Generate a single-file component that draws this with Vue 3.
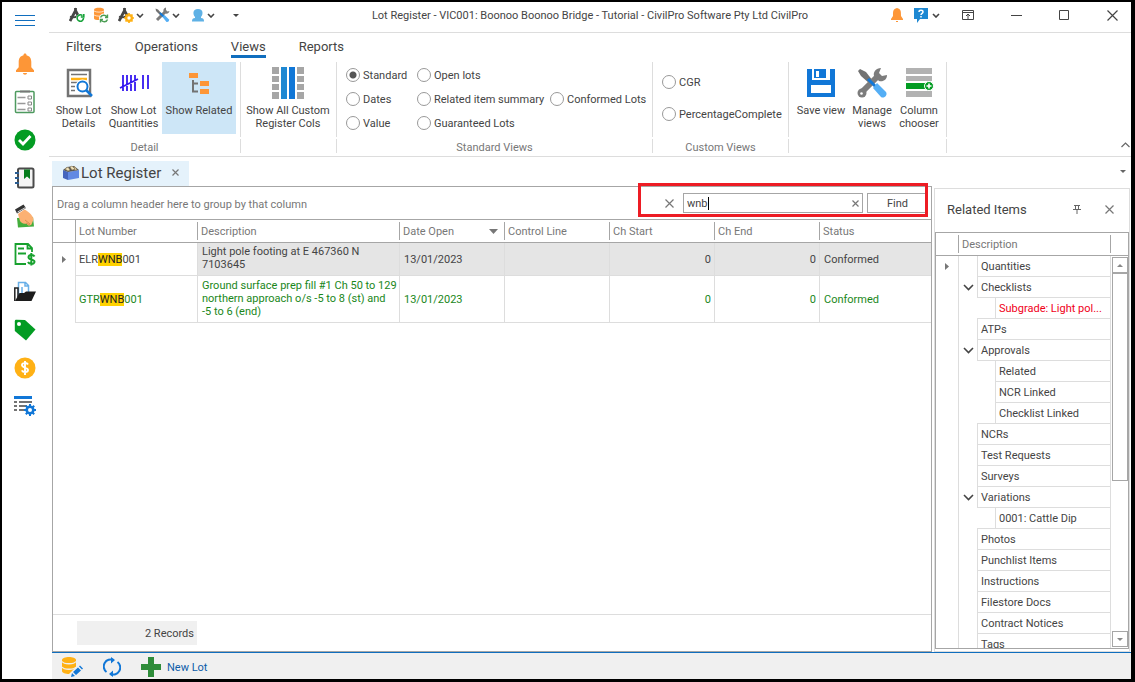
<script setup>
import { ref } from 'vue'

const tabs = ['Filters', 'Operations', 'Views', 'Reports']
const view = ref('Standard')
const search = ref('wnb')
const viewColumns = [
  ['Standard', 'Dates', 'Value'],
  ['Open lots', 'Related item summary', 'Guaranteed Lots'],
  ['', 'Conformed Lots', '']
]
const customViews = ['CGR', 'PercentageComplete']
const lots = [
  { pre: 'ELR', hit: 'WNB', post: '001', text: 'Light pole footing at E 467360 N 7103645', date: '13/01/2023', start: 0, end: 0, status: 'Conformed', current: true },
  { pre: 'GTR', hit: 'WNB', post: '001', text: 'Ground surface prep fill #1 Ch 50 to 129 northern approach o/s -5 to 8 (st) and -5\u00a0to 6 (end)', date: '13/01/2023', start: 0, end: 0, status: 'Conformed', current: false }
]
const tree = [
  { name: 'Quantities', level: 1, current: true },
  { name: 'Checklists', level: 1, open: true },
  { name: 'Subgrade: Light pol...', level: 2, last: true, alert: true },
  { name: 'ATPs', level: 1 },
  { name: 'Approvals', level: 1, open: true },
  { name: 'Related', level: 2 },
  { name: 'NCR Linked', level: 2 },
  { name: 'Checklist Linked', level: 2, last: true },
  { name: 'NCRs', level: 1 },
  { name: 'Test Requests', level: 1 },
  { name: 'Surveys', level: 1 },
  { name: 'Variations', level: 1, open: true },
  { name: '0001: Cattle Dip', level: 2, last: true },
  { name: 'Photos', level: 1 },
  { name: 'Punchlist Items', level: 1 },
  { name: 'Instructions', level: 1 },
  { name: 'Filestore Docs', level: 1 },
  { name: 'Contract Notices', level: 1 },
  { name: 'Tags', level: 1 }
]
</script>

<template>
  <div class="window">
    <nav class="rail" aria-label="Modules">
      <button class="menu" aria-label="Menu">
        <svg width="20" height="12" viewBox="0 0 20 12"><path d="M0 .5h20M0 5.5h20M0 10.5h20" stroke="#106ebe" /></svg>
      </button>
      <button aria-label="Notifications">
        <svg width="22" height="22" viewBox="0 0 22 22" fill="#fd9637"><path d="M11 .5c1 0 1.500.7 1.500 1.700C16 3 17.300 5.600 17.300 9v5.300l2.700 3V19H2v-1.700l2.700-3V9C4.700 5.600 6 3 9.500 2.200 9.500 1.200 10 .5 11 .5zM9 20h4c0 1-1 1.700-2 1.700S9 21 9 20z" /></svg>
      </button>
      <button aria-label="Checklists">
        <svg width="22" height="24" viewBox="0 0 22 24" fill="none"><rect x="1.500" y="1.500" width="18.500" height="21" rx="1" stroke="#4e9a5f" stroke-width="1.500" /><path d="M6 1.500h10" stroke="#777" stroke-width="2" /><path d="M3.500 7.500h8M3.500 13.500h8M3.500 19.500h8" stroke="#999" stroke-width="1.300" /><path d="M14 6h3.500v3H14zM14 12h3.500v3H14zM14 18h3.500v3H14z" stroke="#888" /></svg>
      </button>
      <button aria-label="Approvals">
        <svg width="22" height="22" viewBox="0 0 22 22"><circle cx="11" cy="11" r="10.500" fill="#039c23" /><path d="M5 11l4 4 7.500-8" fill="none" stroke="#fff" stroke-width="2.800" /></svg>
      </button>
      <button aria-label="Diary">
        <svg width="20" height="22" viewBox="0 0 20 22"><rect x="3" y="1.500" width="15.500" height="19" rx="1.500" fill="#f4f4f4" stroke="#4b4b4b" stroke-width="2" /><path d="M9 2.500h6v9.500l-3-2.500-3 2.500z" fill="#047d1b" /><path d="M0 6h4M0 11h4M0 16h4" stroke="#2b5d92" stroke-width="2" /></svg>
      </button>
      <button aria-label="Payments">
        <svg width="22" height="24" viewBox="0 0 22 24"><path d="M3 14l16-1 1 9.500-16 1z" fill="#44ad3c" /><path d="M1 5.500L9.500.5 12 4 3 9.500z" fill="#333" /><path d="M3.500 8L11.500 3.500" stroke="#ddd" stroke-width="1" /><path d="M4 10l6.500-4.500c5 2.500 9 7 9 10l-2 5c-2 2-4 1-5-1-3 1-6.500-1-7-4z" fill="#fcb173" /><path d="M12 19l4 2M11 16l5 4" stroke="#d98c50" fill="none" /></svg>
      </button>
      <button aria-label="Claims">
        <svg width="22" height="24" viewBox="0 0 22 24" fill="none" stroke="#18a12e" stroke-width="1.800"><path d="M12 22H1.500V2H14l4 4v4M13.500 2v4.500H18M4 6.500h6M4 11.500h8" /><path d="M20.500 14.500c-1-2-6-2-6 .8 0 3 6 1.700 6 4.500 0 2.800-5.500 2.500-6.500.2M17.300 11v12.500" stroke-width="2" /></svg>
      </button>
      <button aria-label="Files">
        <svg width="22" height="22" viewBox="0 0 22 22"><path d="M4.500 16V1.500h7l3 3v9M11 1.500V5h3.500M8 14V6" fill="none" stroke="#69b0e8" stroke-width="1.500" /><path d="M.8 20V7H4v9" fill="none" stroke="#222" stroke-width="1.500" /><path d="M5.500 12H10l2-1.500h10L17.500 20H1z" fill="#1c1c1c" /></svg>
      </button>
      <button aria-label="Tags">
        <svg width="22" height="22" viewBox="0 0 22 22"><path d="M.8 2.500C.8 1.200 1.500.8 2.500.8L11 1l10.500 9.500-9.500 11L.8 12z" fill="#039c23" /><circle cx="5" cy="5" r="2" fill="#fff" /></svg>
      </button>
      <button aria-label="Costs">
        <svg width="22" height="22" viewBox="0 0 22 22"><circle cx="11" cy="11" r="10.500" fill="#ffb115" /><path d="M14 7.500c-1-2-6-2-6 .6 0 3 6 2 6 5 0 2.600-5.200 2.400-6.200.2M11 4v14" stroke="#fff" stroke-width="1.900" fill="none" /></svg>
      </button>
      <button aria-label="Register settings">
        <svg width="22" height="22" viewBox="0 0 22 22"><path d="M0 2.500h18" stroke="#1177d7" stroke-width="3" /><path d="M0 7h3M5 7h13M0 11h3M5 11h8M0 15h3M5 15h5" stroke="#737373" stroke-width="2" /><circle cx="16" cy="15" r="3.300" fill="none" stroke="#1177d7" stroke-width="2.600" /><path d="M16 9v2.500M16 18.500V21M10 15h2.500M19.500 15H22M11.800 10.800l1.700 1.700M18.500 17.500l1.700 1.700M20.200 10.800l-1.700 1.700M13.500 17.500l-1.700 1.700" stroke="#1177d7" stroke-width="2" /></svg>
      </button>
    </nav>

    <div class="main">
      <header class="titlebar">
        <div class="tools">
          <button aria-label="Refresh lots">
            <svg width="16" height="16" viewBox="0 0 16 16" fill="none"><path d="M1 14L6.500 3.500 12 14M6.500 1v3" stroke="#454545" stroke-width="2.800" /><path d="M1 9.500c3 1.500 6 1 8-1.500" stroke="#454545" stroke-width="1.800" /><circle cx="11.500" cy="11.500" r="4.500" fill="#fff" /><path d="M14.500 11a3.200 3.200 0 1 1-1-2.300M14.800 7v3h-3" stroke="#17a33a" stroke-width="1.600" /></svg>
          </button>
          <button aria-label="Refresh data">
            <svg width="16" height="16" viewBox="0 0 16 16"><path d="M1 2.500C1 .3 11 .3 11 2.500v9c0 2-10 2-10 0z" fill="#fd9637" /><path d="M1 4c2 1.500 8 1.500 10 0M1 8c2 1.500 8 1.500 10 0" fill="none" stroke="#fff" stroke-width=".7" /><circle cx="11" cy="11.500" r="5" fill="#fff" /><path d="M7.500 10.500c1-3 5-3 6.500-.5M14.500 7.500V10.500H12M14.500 12.500c-1 3-5 3-6.500.5M7.500 15.500v-3H10" fill="none" stroke="#4a9d53" stroke-width="1.400" /></svg>
          </button>
          <button class="wide" aria-label="Lot options">
            <svg width="16" height="16" viewBox="0 0 16 16" fill="none"><path d="M1 14L6.500 3.500 12 14M6.500 1v3" stroke="#454545" stroke-width="2.800" /><path d="M1 9.500c3 1.500 6 1 8-1.500" stroke="#454545" stroke-width="1.800" /><circle cx="11" cy="11" r="4" fill="#ffb115" /><path d="M11 6v10M6 11h10M7.500 7.500l7 7M14.500 7.500l-7 7" stroke="#ffb115" stroke-width="1.700" /><circle cx="11" cy="11" r="1.700" fill="#fff" /></svg>
            <svg class="chev" width="8" height="5" viewBox="0 0 8 5"><path d="M1 1l3 3 3-3" /></svg>
          </button>
          <button class="wide" aria-label="Tools">
            <svg width="16" height="16" viewBox="0 0 32 32"><path d="M3 3l5 2 8 9-3 3-9-9z" fill="#727272" /><path d="M6 26L24 8" stroke="#7c7c7c" stroke-width="6" /><path d="M24 1c-4 1-6 4-5 8l4 4c4 1 7-1 8-5l-4 1-3-3z" fill="#7c7c7c" /><path d="M12 12l8 8" stroke="#1177d7" stroke-width="4" /><path d="M17 20l4-4 9 9c1 3-2 6-5 5z" fill="#54aef5" /></svg>
            <svg class="chev" width="8" height="5" viewBox="0 0 8 5"><path d="M1 1l3 3 3-3" /></svg>
          </button>
          <button class="wide" aria-label="User">
            <svg width="14" height="14" viewBox="0 0 14 14" fill="#5fb1e5"><path d="M7 1c6 0 5 6 3 8v1c2 0 3 1 3 3v.5H1V13c0-2 1-3 3-3V9C2 7 1 1 7 1z" /></svg>
            <svg class="chev" width="8" height="5" viewBox="0 0 8 5"><path d="M1 1l3 3 3-3" /></svg>
          </button>
          <button aria-label="Customise toolbar"><svg width="6" height="3" viewBox="0 0 6 3"><path d="M0 0h6L3 3z" fill="#444" /></svg></button>
        </div>
        <h1>Lot Register - VIC001: Boonoo Boonoo Bridge - Tutorial - CivilPro Software Pty Ltd CivilPro</h1>
        <div class="controls">
          <button class="bell" aria-label="Alerts">
            <svg width="12" height="14" viewBox="0 0 12 14" fill="#fd9637"><path d="M6 0c4 1 4 3 4 8l2 3v1H0v-1l2-3c0-5 0-7 4-8zM5 13h2v1H5z" /></svg>
          </button>
          <button class="help" aria-label="Help">
            <svg width="14" height="15" viewBox="0 0 14 15"><path d="M0 0h14v11H6l-3 4v-4H0z" fill="#1e88d2" /><path d="M5 4c0-2.300 4-2.300 4 0 0 1.300-2 1.300-2 3M7 8v1.500" fill="none" stroke="#fff" stroke-width="1.500" /></svg>
            <svg class="chev" width="8" height="5" viewBox="0 0 8 5"><path d="M1 1l3 3 3-3" /></svg>
          </button>
          <button class="pinwin" aria-label="Ribbon display">
            <svg width="12" height="10" viewBox="0 0 12 10" fill="none" stroke="#444"><path d="M.5.5h11v9H.5zM.5 2.500h11M6 9V4M4 6l2-2 2 2" /></svg>
          </button>
          <button class="win" aria-label="Minimise"><svg width="11" height="11" viewBox="0 0 11 11"><path d="M0 5.500h11" stroke="#444" /></svg></button>
          <button class="win" aria-label="Maximise"><svg width="11" height="11" viewBox="0 0 11 11"><path d="M.5.5h9v9h-9z" fill="none" stroke="#444" /></svg></button>
          <button class="win" aria-label="Close"><svg width="11" height="11" viewBox="0 0 11 11"><path d="M.5.5l10 10M10.500.5l-10 10" stroke="#444" stroke-width="1.200" /></svg></button>
        </div>
      </header>

      <div class="tabs" role="tablist">
        <button v-for="t in tabs" :key="t" role="tab" :aria-selected="t === 'Views'" :class="{ active: t === 'Views' }">{{ t }}</button>
      </div>

      <div class="ribbon">
        <section class="group detail">
          <div class="body">
            <button class="tool">
              <svg width="32" height="32" viewBox="0 0 32 32" fill="none"><rect x="5" y="3" width="22" height="26" stroke="#737373" stroke-width="2.500" /><path d="M8 7.500h16M8 15.500h7M8 19.500h4M8 23.500h4" stroke="#737373" stroke-width="1.500" /><path d="M8 12h16" stroke="#ffb115" stroke-width="2.500" /><circle cx="19.500" cy="19.500" r="7" fill="#fff" /><circle cx="19.500" cy="19.500" r="5" stroke="#1177d7" stroke-width="2" /><path d="M23 23l6 6" stroke="#1177d7" stroke-width="2.500" /></svg>
              <span>Show Lot<br>Details</span>
            </button>
            <button class="tool">
              <svg width="32" height="32" viewBox="0 0 32 32" fill="none" stroke="#3418f0" stroke-width="1.800"><path d="M5 8v16M9 8v16M13 8v16M17 8v16M2 21l18-9M25 8v14M30 8v14" /></svg>
              <span>Show Lot<br>Quantities</span>
            </button>
            <button class="tool on">
              <svg width="32" height="32" viewBox="0 0 32 32"><path d="M6 6h9v5H6zM17 14h9v5h-9zM17 22h9v5h-9z" fill="#fd9637" /><path d="M10 13v11.500h5M10 16.500h5" stroke="#737373" stroke-width="2" fill="none" /></svg>
              <span>Show Related</span>
            </button>
          </div>
          <h2>Detail</h2>
        </section>
        <section class="group cols">
          <div class="body">
            <button class="tool">
              <svg width="32" height="32" viewBox="0 0 32 32"><path d="M0 0h7v7H0zM0 9h7v6H0zM0 17h7v6H0zM0 25h7v7H0zM25 0h7v7h-7zM25 9h7v6h-7zM25 17h7v6h-7zM25 25h7v7h-7z" fill="#a6a6a6" /><path d="M9 0h6v32H9z" fill="#1e88d2" /><path d="M17 0h6v32h-6z" fill="#1177d7" /></svg>
              <span>Show All Custom<br>Register Cols</span>
            </button>
          </div>
          <h2></h2>
        </section>
        <section class="group standard">
          <div class="body radios">
            <div v-for="(col, i) in viewColumns" :key="i" class="radiocol">
              <template v-for="(v, j) in col" :key="j">
                <label v-if="v"><input v-model="view" type="radio" name="view" :value="v">{{ v }}</label>
                <span v-else class="blank"></span>
              </template>
            </div>
          </div>
          <h2>Standard Views</h2>
        </section>
        <section class="group custom">
          <div class="body radios">
            <div class="radiocol spaced">
              <label v-for="v in customViews" :key="v"><input v-model="view" type="radio" name="view" :value="v">{{ v }}</label>
            </div>
          </div>
          <h2>Custom Views</h2>
        </section>
        <section class="group manage">
          <div class="body">
            <button class="tool">
              <svg width="32" height="32" viewBox="0 0 32 32"><path d="M2 2h28v28H2z" fill="#1177d7" /><path d="M7 2h18v11H7z" fill="#fff" /><path d="M9 2h12v9H9z" fill="#1177d7" /><path d="M11 4h3v6h-3zM6 18h20v8H6z" fill="#fff" /></svg>
              <span>Save view</span>
            </button>
            <button class="tool">
              <svg width="32" height="32" viewBox="0 0 32 32"><path d="M4 2l6 3 7 9-3 3L5 9 2 4z" fill="#727272" /><path d="M6 25L23 8" stroke="#7c7c7c" stroke-width="6" /><circle cx="6" cy="26" r="4.500" fill="#7c7c7c" /><circle cx="5.500" cy="26.500" r="1.300" fill="#fff" /><path d="M25 1c-5 0-8 4-7 8l5 5c4 1 8-1 8-6l-5 1-3-3z" fill="#7c7c7c" /><path d="M12 12l8 8" stroke="#1177d7" stroke-width="3" /><path d="M17 21l4-5 9 9c2 3-2 7-5 5z" fill="#54aef5" /></svg>
              <span>Manage<br>views</span>
            </button>
            <button class="tool">
              <svg width="32" height="32" viewBox="0 0 32 32"><path d="M3 1h26v6H3zM3 9h26v5H3zM3 24h26v6H3z" fill="#b2b2b2" /><path d="M3 16h19v6H3z" fill="#039c23" /><circle cx="26" cy="19" r="4.500" fill="#039c23" stroke="#fff" /><path d="M26 16.500v5M23.500 19h5" stroke="#fff" stroke-width="1.600" /></svg>
              <span>Column<br>chooser</span>
            </button>
          </div>
          <h2></h2>
        </section>
        <button class="collapse" aria-label="Collapse ribbon"><svg class="chev thin" width="9" height="6" viewBox="0 0 9 6"><path d="M.5 5l4-4 4 4" /></svg></button>
      </div>

      <div class="doctabs">
        <div class="doctab">
          <svg width="18" height="16" viewBox="0 0 18 16"><path d="M1 5l5 2v8l-5-2z" fill="#4665bd" /><path d="M6 7l11-2v8L6 15z" fill="#6289e3" /><path d="M1 5l4-3 7-1 5 4L6 7z" fill="#555" /><path d="M3 4l3-2 2 3-2 1zM8 2l2-1 3 3-3 1zM12 1l1 1 2 3-2 0z" fill="#eee0b8" stroke="#8c7951" stroke-width=".5" /></svg>
          <span>Lot Register</span>
          <button aria-label="Close tab"><svg class="cross" width="7" height="7" viewBox="0 0 7 7"><path d="M.5.5l6 6M6.500.5l-6 6" /></svg></button>
        </div>
        <button class="more" aria-label="Window list"><svg width="6" height="3" viewBox="0 0 6 3"><path d="M0 0h6L3 3z" fill="#666" /></svg></button>
      </div>

      <div class="workspace">
        <main class="register">
          <div class="grouping">
            <p>Drag a column header here to group by that column</p>
            <form class="find" @submit.prevent>
              <button class="plain" type="button" aria-label="Close find panel"><svg class="cross" width="9" height="9" viewBox="0 0 9 9"><path d="M.5.5l8 8M8.500.5l-8 8" /></svg></button>
              <div class="box">
                <div class="typed">
                  <input v-model="search" type="text" aria-label="Find text">
                  <i class="caret"></i>
                </div>
                <button class="plain clear" type="button" aria-label="Clear"><svg class="cross" width="7" height="7" viewBox="0 0 7 7"><path d="M.5.5l6 6M6.500.5l-6 6" /></svg></button>
              </div>
              <button class="go" type="submit">Find</button>
            </form>
          </div>
          <div class="tablewrap">
            <table>
              <colgroup><col class="c0"><col class="c1"><col class="c2"><col class="c3"><col class="c3"><col class="c3"><col class="c3"><col></colgroup>
              <thead>
                <tr>
                  <th></th><th><span>Lot Number</span></th><th><span>Description</span></th>
                  <th><span>Date Open<svg width="9" height="5" viewBox="0 0 9 5"><path d="M0 0h9L4.500 5z" fill="#777" /></svg></span></th>
                  <th><span>Control Line</span></th><th><span>Ch Start</span></th><th><span>Ch End</span></th><th><span>Status</span></th>
                </tr>
              </thead>
              <tbody>
                <tr v-for="lot in lots" :key="lot.pre" :class="{ current: lot.current }">
                  <td class="ind"><svg v-if="lot.current" width="4" height="7" viewBox="0 0 4 7"><path d="M0 0l4 3.500L0 7z" fill="#777" /></svg></td>
                  <td class="lot">{{ lot.pre }}<mark>{{ lot.hit }}</mark>{{ lot.post }}</td>
                  <td class="desc">{{ lot.text }}</td>
                  <td>{{ lot.date }}</td>
                  <td></td>
                  <td class="num">{{ lot.start }}</td>
                  <td class="num">{{ lot.end }}</td>
                  <td class="status">{{ lot.status }}</td>
                </tr>
              </tbody>
            </table>
          </div>
          <div class="summary"><span>2 Records</span></div>
        </main>

        <aside class="related">
          <div class="paneltitle">
            <h2>Related Items</h2>
            <button class="plain" aria-label="Pin panel"><svg width="8" height="9" viewBox="0 0 8 9" fill="none" stroke="#666"><path d="M1 .5h6M2.500.5v4M5.500.5v4M0 4.500h8M4 5v4" /></svg></button>
            <button class="plain" aria-label="Close panel"><svg class="cross" width="9" height="9" viewBox="0 0 9 9"><path d="M.5.5l8 8M8.500.5l-8 8" /></svg></button>
          </div>
          <div class="treegrid">
            <div class="treehead"><span>Description</span></div>
            <div class="treebody">
              <ul role="tree">
                <li v-for="n in tree" :key="n.name" role="treeitem" :class="{ child: n.level === 2, last: n.last, alert: n.alert }">
                  <span class="mark"><svg v-if="n.current" width="5" height="7" viewBox="0 0 5 7"><path d="M0 0l4 3.500L0 7z" fill="#777" /></svg></span>
                  <span class="fold"><button v-if="n.open" class="plain" :aria-label="'Collapse ' + n.name"><svg class="chev" width="11" height="7" viewBox="0 0 11 7"><path d="M1 1l4.500 4.500L10 1" /></svg></button></span>
                  <span v-if="n.level === 2" class="indent"></span>
                  <span class="name">{{ n.name }}</span>
                </li>
              </ul>
              <div class="scroll" aria-hidden="true">
                <div class="arrow"><svg width="6" height="3" viewBox="0 0 6 3"><path d="M0 3h6L3 0z" fill="#888" /></svg></div>
                <div class="track"><div class="thumb"></div></div>
                <div class="arrow"><svg width="6" height="3" viewBox="0 0 6 3"><path d="M0 0h6L3 3z" fill="#888" /></svg></div>
              </div>
            </div>
          </div>
        </aside>
      </div>

      <footer class="statusbar">
        <button aria-label="Edit data">
          <svg width="22" height="22" viewBox="0 0 22 22"><path d="M1 4c0-4 14-4 14 0v11c0 4-14 4-14 0z" fill="#ffb115" /><path d="M1 5.500c2 3 12 3 14 0M1 11c2 3 12 3 14 0" fill="none" stroke="#f0f0f0" stroke-width="1.300" /><path d="M8 18L17 9l5 4-9 9H8z" fill="#f0f0f0" /><path d="M10 21l1-4 3 3zM12 16l5-4.500 3 3-5 4.500zM18 10.500l1-1 3 3-1 1z" fill="#1177d7" /></svg>
        </button>
        <button aria-label="Refresh">
          <svg width="18" height="20" viewBox="0 0 18 20" fill="none" stroke="#1177d7" stroke-width="2"><path d="M10.500 3A7 7 0 0 0 3.500 15M7.500 17a7 7 0 0 0 7-12" /><path d="M8 0l4 3-4 3.500zM10 13.500L6 17l4 3z" fill="#1177d7" stroke="none" /></svg>
        </button>
        <button class="new">
          <svg width="20" height="20" viewBox="0 0 20 20"><path d="M7 0h6v7h7v6h-7v7H7v-7H0V7h7z" fill="#2f8c3a" /></svg>
          New Lot
        </button>
      </footer>
    </div>
  </div>
</template>

<style>
body { margin: 0; }
</style>

<style scoped>
.window {
  box-sizing: border-box;
  display: flex;
  height: 100vh;
  border: solid #000;
  border-width: 2px 4px 3px 2px;
  background: #fff;
  color: #444;
  font: 11px/13px Roboto, "Noto Sans", sans-serif;
}
.window *, .window *::after { box-sizing: border-box; }
button { display: flex; align-items: center; justify-content: center; margin: 0; padding: 0; border: 0; background: none; color: inherit; font: inherit; white-space: nowrap; }
svg { display: block; flex: none; }
h1, h2, p, ul { margin: 0; padding: 0; font: inherit; list-style: none; }
.chev { fill: none; stroke: #444; stroke-width: 1.6; }
.chev.thin { stroke-width: 1.2; stroke: #666; }
.cross { fill: none; stroke: #777; stroke-width: 1.2; }

.rail { width: 47px; flex: none; display: flex; flex-direction: column; padding-right: 1px; }
.rail button { height: 38px; }
.rail .menu { height: 43px; padding-bottom: 6px; }

.main { flex: 1; min-width: 0; display: flex; flex-direction: column; }
.titlebar { display: grid; grid-template-columns: 1fr auto 1fr; align-items: center; height: 31px; flex: none; padding-bottom: 4px; border-bottom: 1px solid #ddd; }
.titlebar h1 { white-space: nowrap; }
.tools { display: flex; align-items: center; gap: 8px; padding-left: 20px; }
.tools .wide { gap: 2px; width: 28px; }
.tools button:last-child { margin-left: 8px; }
.controls { display: flex; align-items: center; justify-content: flex-end; }
.controls .bell { margin-right: 11px; }
.controls .help { gap: 4px; margin-right: 22px; }
.controls .pinwin { margin-right: 24px; }
.controls .win { width: 37px; height: 20px; margin-left: 11px; }
.controls .win:nth-last-child(3) { margin-left: 0; }

.tabs { display: flex; height: 29px; flex: none; gap: 33px; padding-left: 17px; font-size: 13px; }
.tabs button { height: 25px; padding-top: 2px; border-bottom: 3px solid transparent; border-top: 3px solid transparent; }
.tabs .active { border-bottom-color: #106ebe; }

.ribbon { position: relative; display: flex; height: 95px; flex: none; border-bottom: 1px solid #ddd; }
.group { display: flex; flex-direction: column; flex: none; gap: 2px; }
.body { display: flex; height: 75px; border-right: 1px solid #ddd; }
.group h2 { height: 14px; line-height: 17px; text-align: center; color: #777; border-right: 1px solid #ddd; }
.detail { width: 192px; }
.detail .body { padding-left: 2px; }
.cols { width: 96px; }
.standard { width: 316px; }
.custom { width: 136px; }
.manage { width: 158px; }
.tool { flex-direction: column; justify-content: flex-start; height: 72px; width: 55px; padding-top: 5px; gap: 5px; text-align: center; }
.tool.on { width: 74px; margin-left: 1px; background: #cde6f7; }
.cols .tool { width: 94px; }
.manage .body { padding-left: 5px; }
.manage .tool { width: 54px; }
.manage .tool + .tool { width: 46px; }
.manage .tool:nth-child(2) { width: 48px; }
.radios { padding: 1px 0 0 9px; }
.radiocol { display: flex; flex-direction: column; white-space: nowrap; }
.radiocol:nth-child(1) { width: 71px; }
.radiocol:nth-child(2) { width: 133px; }
.radiocol label, .blank { display: flex; align-items: center; gap: 3px; height: 24px; }
.radiocol.spaced { padding-top: 3px; }
.spaced label { height: 32px; }
.radiocol input { appearance: none; flex: none; width: 14px; height: 14px; margin: 0; border: 1px solid #999; border-radius: 50%; background: #fff; }
.radiocol input:checked { background: radial-gradient(circle, #555 3px, #fff 4px); }
.collapse { position: absolute; right: 1px; bottom: 8px; }

.doctabs { display: flex; justify-content: space-between; height: 29px; flex: none; padding: 4px 5px 0 3px; }
.doctab { display: flex; align-items: center; padding: 0 10px 2px; gap: 1px; background: #e5f2fb; font-size: 15px; line-height: 18px; }
.doctab button { margin-left: 10px; }
.more { height: 21px; }

.workspace { flex: 1; min-height: 0; display: flex; gap: 2px; padding: 0 1px 0 3px; }
.register { flex: 1; min-width: 0; display: flex; flex-direction: column; border: 1px solid #a6a6a6; }
.grouping { display: flex; justify-content: space-between; height: 33px; flex: none; border-bottom: 1px solid #a6a6a6; color: #777; }
.grouping p { padding: 11px 4px 9px; }
.find { position: relative; display: flex; align-items: center; width: 290px; margin-right: 3px; gap: 4px; color: #444; }
.find::after { content: ""; position: absolute; inset: -4px 0 2px; border: 3px solid #ed1c24; pointer-events: none; }
.plain { width: 20px; }
.find > .plain { width: 24px; margin-left: 19px; margin-right: -2px; }
.box { display: flex; flex: 1; min-width: 0; height: 20px; border: 1px solid #a6a6a6; }
.typed { position: relative; flex: 1; min-width: 0; display: flex; }
.typed input { width: 100%; min-width: 0; padding: 0 3px; border: 0; outline: 0; background: none; color: inherit; font: inherit; }
.caret { position: absolute; left: 24px; top: 3px; width: 1px; height: 13px; background: #000; }
.clear { width: 14px; }
.go { width: 61px; height: 20px; border: 1px solid #a6a6a6; }

.tablewrap { flex: 1; min-height: 0; overflow: hidden; }
table { width: 100%; table-layout: fixed; border-collapse: separate; border-spacing: 0; }
.c0 { width: 23px; }
.c1 { width: 122px; }
.c2 { width: 202px; }
.c3 { width: 105px; }
th { height: 23px; padding: 0; border-bottom: 1px solid #a6a6a6; text-align: left; font-weight: 400; color: #777; }
th span { display: flex; align-items: center; justify-content: space-between; height: 18px; padding: 0 6px 0 3px; border-right: 1px solid #a6a6a6; }
th:first-child { border-right: 1px solid #a6a6a6; }
th:last-child span { border-right: 0; }
td { height: 47px; padding: 0 4px; border: solid #ddd; border-width: 0 1px 1px 0; color: #1a871a; }
td.ind { border-bottom: 0; padding-left: 9px; }
td.lot { padding-left: 3px; }
td.desc { padding-right: 0; padding-bottom: 2px; }
td.num { text-align: right; padding-right: 3px; }
td.status { border-right: 0; }
.current td { height: 33px; background: #e5e5e5; color: #444; }
.current td.ind, .current td.lot { background: #fff; }
mark { background: #ffd200; color: #222; }
.summary { display: flex; height: 37px; flex: none; padding: 6px 24px; border-top: 1px solid #ddd; }
.summary span { width: 120px; height: 24px; padding-right: 3px; line-height: 25px; text-align: right; background: #f0f0f0; }

.related { display: flex; flex-direction: column; width: 196px; margin-top: 2px; padding-bottom: 2px; border: 1px solid #ddd; }
.paneltitle { display: flex; align-items: center; height: 43px; flex: none; gap: 12px; padding: 0 10px 2px 12px; }
.paneltitle h2 { flex: 1; font-size: 13px; line-height: 18px; }
.treegrid { flex: 1; min-height: 0; display: flex; flex-direction: column; border: 1px solid #a6a6a6; }
.treehead { display: flex; align-items: center; height: 23px; flex: none; padding: 0 17px 0 22px; border-bottom: 1px solid #a6a6a6; color: #777; }
.treehead span { flex: 1; height: 18px; padding-left: 3px; line-height: 19px; border: solid #a6a6a6; border-width: 0 1px; }
.treebody { flex: 1; min-height: 0; display: flex; overflow: hidden; }
.treebody ul { flex: 1; min-width: 0; }
li { display: flex; height: 21px; }
.mark { width: 23px; display: flex; align-items: center; justify-content: center; border-right: 1px solid #ddd; }
.fold { width: 18px; display: flex; align-items: center; justify-content: center; }
.indent { width: 18px; }
.name { flex: 1; min-width: 0; padding-left: 3px; line-height: 21px; white-space: nowrap; border: solid #ddd; border-width: 0 1px 1px; }
.last .indent { border-bottom: 1px solid #ddd; }
.alert .name { color: #f00018; }
.scroll { width: 16px; flex: none; display: flex; flex-direction: column; margin: 1px 0 1px 1px; }
.arrow { height: 16px; display: flex; align-items: center; justify-content: center; border: 1px solid #a6a6a6; }
.track { flex: 1; }
.thumb { height: 58%; border: 1px solid #a6a6a6; background: #fff; }

.statusbar { display: flex; align-items: center; height: 27px; flex: none; margin-left: 3px; padding: 2px 9px 0; gap: 20px; border-top: 1px solid #106ebe; background: #f0f0f0; color: #0c5ca8; }
.statusbar .new { gap: 6px; }
</style>
